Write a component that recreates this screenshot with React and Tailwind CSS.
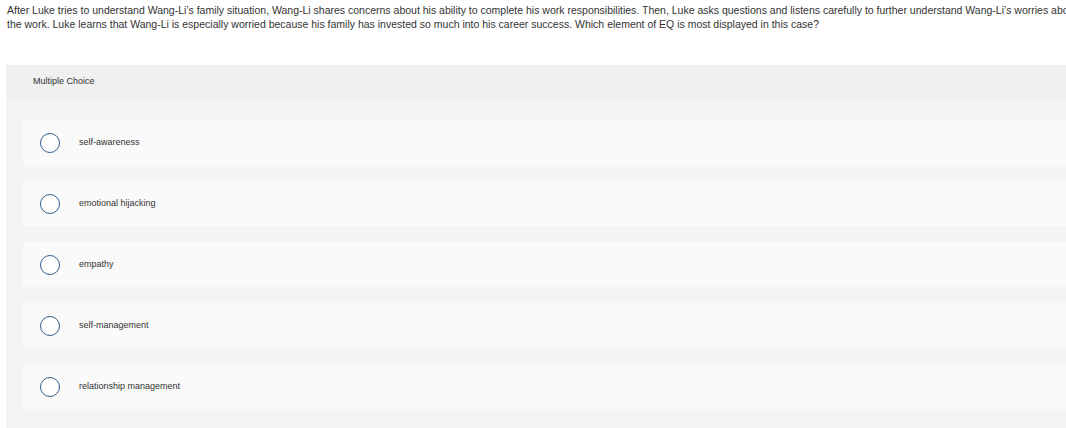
import React from 'react';

const options = [
  'self-awareness',
  'emotional hijacking',
  'empathy',
  'self-management',
  'relationship management',
];

function Option({ label }) {
  return (
    <label className="flex items-center h-[45px] bg-[#fafafa] pl-[17px] cursor-pointer">
      <span className="w-[20px] h-[20px] rounded-full border-[1.5px] border-[#2f5d8c] bg-white shrink-0" />
      <span className="ml-[19px] text-[9px] text-[#333]">{label}</span>
    </label>
  );
}

export default function App() {
  return (
    <div className="w-[1066px] h-[428px] overflow-hidden bg-white" style={{ fontFamily: '"Liberation Sans", Arial, sans-serif' }}>
      <div className="w-[1120px] pl-[7px]">
        {/* Question stem */}
        <p className="pt-[3px] text-[10.5px] leading-[14px] text-[#333] whitespace-nowrap">
          After Luke tries to understand Wang-Li&rsquo;s family situation, Wang-Li shares concerns about his ability to complete his work responsibilities. Then, Luke asks questions and listens carefully to further understand Wang-Li&rsquo;s worries about
          <br />
          the work. Luke learns that Wang-Li is especially worried because his family has invested so much into his career success. Which element of EQ is most displayed in this case?
        </p>

        {/* Answer panel */}
        <div className="mt-[34px] -ml-[1px] bg-[#f4f4f4]">
          <div className="h-[34px] bg-[#f0f0f0] pl-[27px] flex items-center text-[9px] text-[#333]">
            Multiple Choice
          </div>
          <div className="pt-[21px] pl-[17px] pb-[20px] flex flex-col gap-[16px]">
            {options.map(o => (
              <Option key={o} label={o} />
            ))}
          </div>
        </div>
      </div>
    </div>
  );
}
